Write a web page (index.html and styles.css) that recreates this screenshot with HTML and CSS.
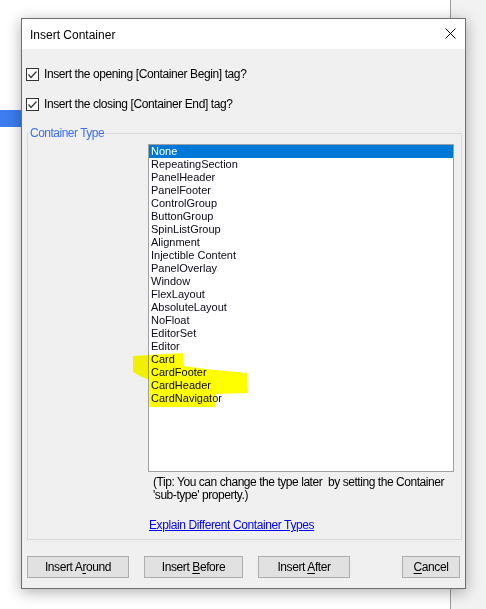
FILE: index.html
```html
<!DOCTYPE html>
<html>
<head>
<meta charset="utf-8">
<title>Insert Container</title>
<link rel="stylesheet" href="styles.css">
</head>
<body>
<div class="desktop">
  <div class="page"><div class="selband"></div></div>
  <div class="divider"></div>
  <div class="sidebar"></div>
</div>

<div class="dialog">
  <div class="titlebar">
    <span class="title">Insert Container</span>
    <svg class="close" width="11" height="11" viewBox="0 0 11 11"><path d="M0.5 0.5L10.5 10.5M10.5 0.5L0.5 10.5" stroke="#000" stroke-width="1" fill="none"/></svg>
  </div>
  <div class="body">
    <label class="check first">
      <span class="box"><svg width="11" height="11" viewBox="0 0 11 11"><path d="M1.5 5.5L4 8.5L9.5 2.5" stroke="#333" stroke-width="1.2" fill="none"/></svg></span>
      <span class="label">Insert the opening [Container Begin] tag?</span>
    </label>
    <label class="check second">
      <span class="box"><svg width="11" height="11" viewBox="0 0 11 11"><path d="M1.5 5.5L4 8.5L9.5 2.5" stroke="#333" stroke-width="1.2" fill="none"/></svg></span>
      <span class="label">Insert the closing [Container End] tag?</span>
    </label>

    <fieldset class="group">
      <legend>Container Type</legend>
      <div class="listbox">
        <div class="item selected">None</div>
        <div class="item">RepeatingSection</div>
        <div class="item">PanelHeader</div>
        <div class="item">PanelFooter</div>
        <div class="item">ControlGroup</div>
        <div class="item">ButtonGroup</div>
        <div class="item">SpinListGroup</div>
        <div class="item">Alignment</div>
        <div class="item">Injectible Content</div>
        <div class="item">PanelOverlay</div>
        <div class="item">Window</div>
        <div class="item">FlexLayout</div>
        <div class="item">AbsoluteLayout</div>
        <div class="item">NoFloat</div>
        <div class="item">EditorSet</div>
        <div class="item">Editor</div>
        <div class="item">Card</div>
        <div class="item">CardFooter</div>
        <div class="item">CardHeader</div>
        <div class="item">CardNavigator</div>
      </div>
      <p class="tip">(Tip: You can change the type later&nbsp; by setting the Container<br>'sub-type' property.)</p>
      <a class="link" href="#">Explain Different Container Types</a>
    </fieldset>

    <div class="buttons">
      <button class="btn around">Insert A<u>r</u>ound</button>
      <button class="btn before">Insert <u>B</u>efore</button>
      <button class="btn after">Insert <u>A</u>fter</button>
      <button class="btn cancel"><u>C</u>ancel</button>
    </div>
  </div>
</div>

<svg class="marker" width="486" height="609" viewBox="0 0 486 609">
  <polygon points="133,356 183,353 184,366 205,369 247,373 248,393 216,394 215,407 149,407 149,380 140,376 133,372" fill="#ffff00"/>
</svg>
</body>
</html>
```

FILE: styles.css
```css
html, body {
  margin: 0;
  padding: 0;
  width: 486px;
  height: 609px;
  overflow: hidden;
}

body {
  position: relative;
  background: #fff;
  font-family: "Liberation Sans", Arial, sans-serif;
  color: #000;
}

.desktop {
  display: flex;
  height: 609px;
}

.page {
  width: 450px;
  background: #fff;
}

.selband {
  margin-top: 110px;
  width: 21px;
  height: 17px;
  background: #3c7cf0;
}

.divider {
  width: 1px;
  background: #9a9a9a;
}

.sidebar {
  flex: 1;
  background: #f2f2f2;
}

.dialog {
  position: absolute;
  left: 21px;
  top: 18px;
  width: 445px;
  height: 571px;
  box-sizing: border-box;
  border: 1px solid #6f6f6f;
  background: #f0f0f0;
  box-shadow: 0 3px 14px rgba(0, 0, 0, 0.32);
  display: flex;
  flex-direction: column;
}

.titlebar {
  height: 30px;
  flex: none;
  background: #fff;
  display: flex;
  align-items: center;
  padding-left: 8px;
  padding-top: 1px;
  box-sizing: border-box;
}

.title {
  font-size: 12px;
  line-height: 14px;
}

.close {
  margin-left: auto;
  margin-right: 9px;
  margin-top: -2px;
}

.body {
  flex: 1;
  display: flex;
  flex-direction: column;
  padding: 0 3px 0 5px;
}

.check {
  display: flex;
  align-items: center;
  gap: 5px;
  margin-left: -1px;
  height: 13px;
  font-size: 12px;
  letter-spacing: -0.4px;
}

.check.first { margin-top: 19px; }
.check.second { margin-top: 17px; }

.box {
  width: 13px;
  height: 13px;
  box-sizing: border-box;
  border: 1px solid #333;
  background: #fff;
  display: flex;
  align-items: center;
  justify-content: center;
  flex: none;
}

.box svg { display: block; }

.label { line-height: 13px; }

.group {
  margin: 15px 0 0 0;
  padding: 0 0 7px 0;
  border: 1px solid #dadada;
  min-width: 0;
}

.group legend {
  font-size: 12px;
  line-height: 14px;
  color: #3d6ef5;
  padding: 0 1px;
  margin-left: 1px;
  letter-spacing: -0.5px;
}

.listbox {
  margin: 4px 0 0 120px;
  width: 306px;
  height: 328px;
  box-sizing: border-box;
  border: 1px solid #a0a0a0;
  background: #fff;
}

.item {
  height: 13px;
  line-height: 13px;
  font-size: 11px;
  padding-left: 2px;
  color: #0a0a1a;
  white-space: nowrap;
}

.item.selected {
  background: #0078d7;
  color: #fff;
}

.tip {
  margin: 4px 0 0 125px;
  font-size: 12px;
  line-height: 13px;
  letter-spacing: -0.45px;
  white-space: nowrap;
}

.link {
  display: block;
  margin: 16px 0 0 121px;
  font-size: 12px;
  line-height: 14px;
  letter-spacing: -0.4px;
  color: #0000ff;
  text-decoration: underline;
  width: max-content;
}

.buttons {
  display: flex;
  margin-top: 16px;
}

.btn {
  height: 22px;
  box-sizing: border-box;
  border: 1px solid #adadad;
  background: #e1e1e1;
  font-family: "Liberation Sans", Arial, sans-serif;
  font-size: 12px;
  letter-spacing: -0.4px;
  color: #000;
  padding: 0;
  margin: 0;
}

.btn u { text-underline-offset: 2px; }

.around { width: 102px; }
.before { width: 99px; margin-left: 15px; }
.after { width: 92px; margin-left: 15px; }
.cancel { width: 58px; margin-left: auto; margin-right: 2px; }

.marker {
  position: absolute;
  left: 0;
  top: 0;
  pointer-events: none;
  mix-blend-mode: multiply;
}
```
